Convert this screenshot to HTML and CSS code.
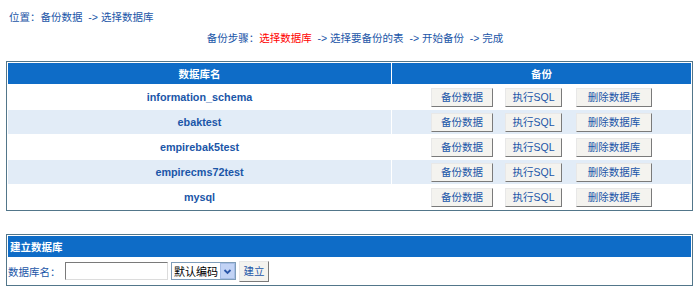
FILE: index.html
```html
<!DOCTYPE html>
<html>
<head>
<meta charset="utf-8">
<link rel="stylesheet" href="styles.css">
</head>
<body>
<div class="page">
  <div class="crumb">位置：<a>备份数据</a> &nbsp;-&gt; <a>选择数据库</a></div>
  <div class="steps">备份步骤：<span class="cur">选择数据库</span> &nbsp;-&gt; 选择要备份的表 &nbsp;-&gt; 开始备份 &nbsp;-&gt; 完成</div>
  <table class="grid">
    <tr class="head"><th class="c1">数据库名</th><th>备份</th></tr>
    <tr><td class="name">information_schema</td><td class="ops"><span class="btn b1">备份数据</span><span class="btn b2">执行SQL</span><span class="btn b3">删除数据库</span></td></tr>
    <tr class="alt"><td class="name">ebaktest</td><td class="ops"><span class="btn b1">备份数据</span><span class="btn b2">执行SQL</span><span class="btn b3">删除数据库</span></td></tr>
    <tr><td class="name">empirebak5test</td><td class="ops"><span class="btn b1">备份数据</span><span class="btn b2">执行SQL</span><span class="btn b3">删除数据库</span></td></tr>
    <tr class="alt"><td class="name">empirecms72test</td><td class="ops"><span class="btn b1">备份数据</span><span class="btn b2">执行SQL</span><span class="btn b3">删除数据库</span></td></tr>
    <tr><td class="name">mysql</td><td class="ops"><span class="btn b1">备份数据</span><span class="btn b2">执行SQL</span><span class="btn b3">删除数据库</span></td></tr>
  </table>
  <table class="grid create">
    <tr class="head"><th class="left">建立数据库</th></tr>
    <tr><td class="form"><span class="label">数据库名：</span><span class="input"></span><span class="select">默认编码<span class="arrow"><svg width="11" height="11" viewBox="0 0 11 11"><path d="M2.5 4 L5.5 7 L8.5 4" fill="none" stroke="#2b56a8" stroke-width="1.8"/></svg></span></span><span class="btn mk">建立</span></td></tr>
  </table>
</div>
</body>
</html>
```
FILE: styles.css
```css
* { box-sizing: border-box; }
body {
  margin: 0;
  background: #fff;
  font-family: "Liberation Sans", "Noto Sans CJK SC", sans-serif;
  font-size: 10.5px;
  color: #1b56a8;
}
.page { padding: 9px 8px 0 6px; }
.crumb { height: 16px; line-height: 16px; padding-left: 3px; }
.crumb a { color: #1b56a8; }
.steps { margin-top: 5px; height: 16px; line-height: 16px; text-align: center; padding-left: 12px; }
.steps .cur { color: #f00; }
table.grid {
  width: 687px;
  border-collapse: separate;
  border-spacing: 1px;
  border: 1px solid #52768a;
  margin-top: 15px;
  background: #fff;
}
table.grid td, table.grid th { padding: 0; }
.head th {
  background: #0e6cc7;
  color: #fff;
  font-weight: bold;
  height: 21px;
  text-align: center;
}
.head th.c1 { width: 383px; }
.head th.left { text-align: left; padding-left: 2px; }
tr.alt td { background: #e2ecf7; }
td.name {
  height: 24px;
  text-align: center;
  font-weight: bold;
  font-size: 10.8px;
  color: #1b56a8;
}
td.ops { text-align: center; white-space: nowrap; }
.btn {
  display: inline-block;
  height: 19px;
  line-height: 17px;
  text-align: center;
  background: #f4f3ef;
  border: 1px solid;
  border-color: #e8e8e8 #7a7a7a #7a7a7a #e8e8e8;
  color: #1b56a8;
  vertical-align: middle;
}
.b1 { width: 62px; }
.b2 { width: 57px; margin-left: 12px; }
.b3 { width: 76px; margin-left: 14px; }
table.create { margin-top: 23px; }
td.form {
  height: 26px;
  padding-left: 2px;
  white-space: nowrap;
  display: flex;
  align-items: center;
}
.label { width: 57px; }
.input {
  display: inline-block;
  width: 103px;
  height: 18px;
  border: 1px solid;
  border-color: #7a7a7a #dcdcdc #dcdcdc #7a7a7a;
  background: #fff;
}
.select {
  display: inline-flex;
  align-items: center;
  width: 65px;
  height: 18px;
  border: 1px solid #7f9db9;
  margin-left: 3px;
  color: #000;
  padding-left: 2px;
  justify-content: space-between;
  background: #fff;
  font-size: 11px;
}
.arrow {
  display: inline-flex;
  width: 15px;
  height: 16px;
  background: #c2d3f5;
  border: 1px solid #a6bde6;
  align-items: center;
  justify-content: center;
}
.btn.mk { width: 30px; height: 21px; line-height: 19px; margin-left: 3px; }
```
